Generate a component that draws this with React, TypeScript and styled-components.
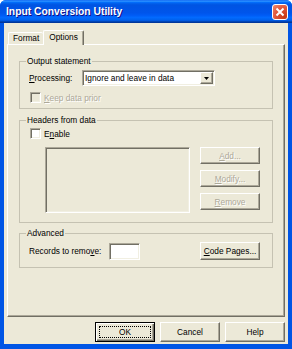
import React from 'react'
import styled, { createGlobalStyle, css } from 'styled-components'

const GlobalStyle = createGlobalStyle`
  html, body { margin: 0; padding: 0; background: #fff; }
  body {
    font-family: "Liberation Sans", Arial, sans-serif;
    font-size: 8.3px;
    color: #000;
  }
`

// classic 3D edges
const sunken = css`
  box-sizing: border-box;
  border: 1px solid;
  border-color: #aca899 #fff #fff #aca899;
  box-shadow: inset 1px 1px 0 #716f64, inset -1px -1px 0 #f1efe2;
`

const raised = css`
  box-sizing: border-box;
  border: 1px solid;
  border-color: #fff #716f64 #716f64 #fff;
  box-shadow: inset -1px -1px 0 #aca899;
`

const disabledText = css`
  color: #aca899;
  text-shadow: 1px 1px 0 #fff;
`

const Window = styled.div`
  width: 292px;
  height: 349px;
  display: flex;
  flex-direction: column;
  background: #0055e5;
  border-radius: 6px 6px 0 0;
  overflow: hidden;
`

const TitleBar = styled.div`
  height: 23px;
  flex: none;
  display: flex;
  align-items: center;
  box-sizing: border-box;
  padding: 0 4px 0 6px;
  background: linear-gradient(
    #0058ee 0%, #3593ff 4%, #288eff 6%, #127dff 8%, #036ffc 10%,
    #0262ee 14%, #0057e5 20%, #0054e3 24%, #0055eb 56%, #005bf5 66%,
    #026afe 76%, #0062ef 86%, #0052d6 92%, #0040ab 94%, #003092 100%
  );
`

const Title = styled.span`
  flex: 1;
  color: #fff;
  font-weight: bold;
  font-size: 10.3px;
  text-shadow: 1px 1px 0 #0f1089;
`

const CloseButton = styled.div`
  width: 16px;
  height: 16px;
  margin-top: 1px;
  box-sizing: border-box;
  border: 1px solid #fff;
  border-radius: 3px;
  background: radial-gradient(circle at 85% 85%, #c63a14 0%, #e0553a 55%, #f08c70 100%);
  display: flex;
  align-items: center;
  justify-content: center;
`

const Client = styled.div`
  flex: 1;
  margin: 0 4px 5px;
  padding: 7px 3px 2px 3px;
  background: #ece9d8;
  display: flex;
  flex-direction: column;
`

const TabStrip = styled.div`
  height: 15px;
  margin-bottom: -1px;
  padding-left: 1px;
  display: flex;
  align-items: flex-start;
  position: relative;
  z-index: 1;
`

const Tab = styled.div<{ $active?: boolean }>`
  box-sizing: border-box;
  height: ${p => (p.$active ? 15 : 12)}px;
  margin-top: ${p => (p.$active ? 0 : 2)}px;
  padding: 0 ${p => (p.$active ? 5 : 4)}px;
  background: #ece9d8;
  border-top: 1px solid #fff;
  border-left: 1px solid #fff;
  border-right: ${p => (p.$active ? '1px solid #716f64' : 'none')};
  box-shadow: ${p => (p.$active ? 'inset -1px 0 0 #aca899' : 'none')};
  border-radius: 2px 2px 0 0;
  line-height: ${p => (p.$active ? 12 : 11)}px;
`

const Panel = styled.div`
  height: 273px;
  flex: none;
  border: 1px solid;
  border-color: #fff #716f64 #716f64 #fff;
  box-shadow: inset -1px -1px 0 #aca899;
  box-sizing: border-box;
  padding: 11px 11px 0 11px;
  display: flex;
  flex-direction: column;
`

const Group = styled.fieldset<{ $mt?: number }>`
  margin: ${p => p.$mt ?? 0}px 0 0 0;
  padding: 0;
  min-inline-size: 0;
  border: 1px solid #c5c2b2;
`

const Legend = styled.legend`
  margin-left: 6px;
  padding: 0 1px;
  line-height: 10px;
  font-size: 8.3px;
`

const GroupBody = styled.div<{ $pb: number }>`
  display: flex;
  flex-direction: column;
  padding: 0 12px ${p => p.$pb}px 9px;
`

const Row = styled.div<{ $mt: number; $h: number }>`
  display: flex;
  align-items: center;
  margin-top: ${p => p.$mt}px;
  height: ${p => p.$h}px;
`

const Label = styled.span<{ $w: number }>`
  width: ${p => p.$w}px;
  flex: none;
  white-space: nowrap;
`

const U = styled.u`
  text-underline-offset: 1px;
`

const Combo = styled.div`
  ${sunken};
  width: 133px;
  height: 16px;
  padding: 1px;
  display: flex;
  background: #fff;
`

const ComboText = styled.span`
  flex: 1;
  padding-left: 1px;
  line-height: 12px;
  white-space: nowrap;
  overflow: hidden;
`

const ComboButton = styled.span`
  ${raised};
  width: 13px;
  background: #ece9d8;
  display: flex;
  align-items: center;
  justify-content: center;
`

const CheckBox = styled.span<{ $disabled?: boolean }>`
  ${sunken};
  width: 11px;
  height: 11px;
  margin-left: 1px;
  flex: none;
  background: ${p => (p.$disabled ? '#ece9d8' : '#fff')};
`

const CheckLabel = styled.span<{ $disabled?: boolean }>`
  margin-left: 3px;
  ${p => p.$disabled && disabledText};
`

const ListRow = styled.div`
  display: flex;
  align-items: flex-start;
  margin-top: 7px;
`

const ListBox = styled.div`
  ${sunken};
  width: 145px;
  height: 66px;
  margin-left: 16px;
  background: #ece9d8;
`

const SideButtons = styled.div`
  margin-left: auto;
  display: flex;
  flex-direction: column;
  gap: 6px;
`

const PushButton = styled.button<{ $w: number; $h: number; $default?: boolean; $push?: boolean }>`
  ${raised};
  position: relative;
  width: ${p => p.$w}px;
  height: ${p => p.$h}px;
  padding: 0;
  margin: 0 0 0 ${p => (p.$push ? 'auto' : '0')};
  flex: none;
  background: #ece9d8;
  font: inherit;
  color: #000;
  ${p =>
    p.$default &&
    css`
      border: 1px solid #000;
      box-shadow: inset 1px 1px 0 #fff, inset -1px -1px 0 #716f64, inset -2px -2px 0 #aca899;
      &::after {
        content: '';
        position: absolute;
        inset: 3px;
        border: 1px dotted #000;
      }
    `}
  &:disabled {
    ${disabledText};
  }
`

const TextBox = styled.span`
  ${sunken};
  width: 31px;
  height: 17px;
  flex: none;
  background: #fff;
`

const ButtonRow = styled.div`
  display: flex;
  justify-content: flex-end;
  gap: 5px;
  margin-top: 5px;
`

export default function App() {
  return (
    <>
      <GlobalStyle />
      <Window>
        <TitleBar>
          <Title>Input Conversion Utility</Title>
          <CloseButton>
            <svg width="10" height="10" viewBox="0 0 10 10">
              <path d="M1.5 1.5 L8.5 8.5 M8.5 1.5 L1.5 8.5" stroke="#fff" strokeWidth="2" />
            </svg>
          </CloseButton>
        </TitleBar>
        <Client>
          <TabStrip>
            <Tab>Format</Tab>
            <Tab $active>Options</Tab>
          </TabStrip>
          <Panel>
            <Group>
              <Legend>Output statement</Legend>
              <GroupBody $pb={4}>
                <Row $mt={4} $h={16}>
                  <Label $w={53}><U>P</U>rocessing:</Label>
                  <Combo>
                    <ComboText>Ignore and leave in data</ComboText>
                    <ComboButton>
                      <svg width="5" height="3" viewBox="0 0 5 3">
                        <path d="M0 0 H5 L2.5 3 Z" fill="#000" />
                      </svg>
                    </ComboButton>
                  </Combo>
                </Row>
                <Row $mt={5} $h={13}>
                  <CheckBox $disabled />
                  <CheckLabel $disabled><U>K</U>eep data prior</CheckLabel>
                </Row>
              </GroupBody>
            </Group>

            <Group $mt={6}>
              <Legend>Headers from data</Legend>
              <GroupBody $pb={9}>
                <Row $mt={2} $h={13}>
                  <CheckBox />
                  <CheckLabel>E<U>n</U>able</CheckLabel>
                </Row>
                <ListRow>
                  <ListBox />
                  <SideButtons>
                    <PushButton $w={60} $h={17} disabled><U>A</U>dd...</PushButton>
                    <PushButton $w={60} $h={17} disabled><U>M</U>odify...</PushButton>
                    <PushButton $w={60} $h={17} disabled><U>R</U>emove</PushButton>
                  </SideButtons>
                </ListRow>
              </GroupBody>
            </Group>

            <Group $mt={5}>
              <Legend>Advanced</Legend>
              <GroupBody $pb={7}>
                <Row $mt={4} $h={18}>
                  <Label $w={80}>Records to remo<U>v</U>e:</Label>
                  <TextBox />
                  <PushButton $w={60} $h={18} $push>
                    <U>C</U>ode Pages...
                  </PushButton>
                </Row>
              </GroupBody>
            </Group>
          </Panel>
          <ButtonRow>
            <PushButton $w={60} $h={20} $default>OK</PushButton>
            <PushButton $w={60} $h={20}>Cancel</PushButton>
            <PushButton $w={60} $h={20}>Help</PushButton>
          </ButtonRow>
        </Client>
      </Window>
    </>
  )
}
